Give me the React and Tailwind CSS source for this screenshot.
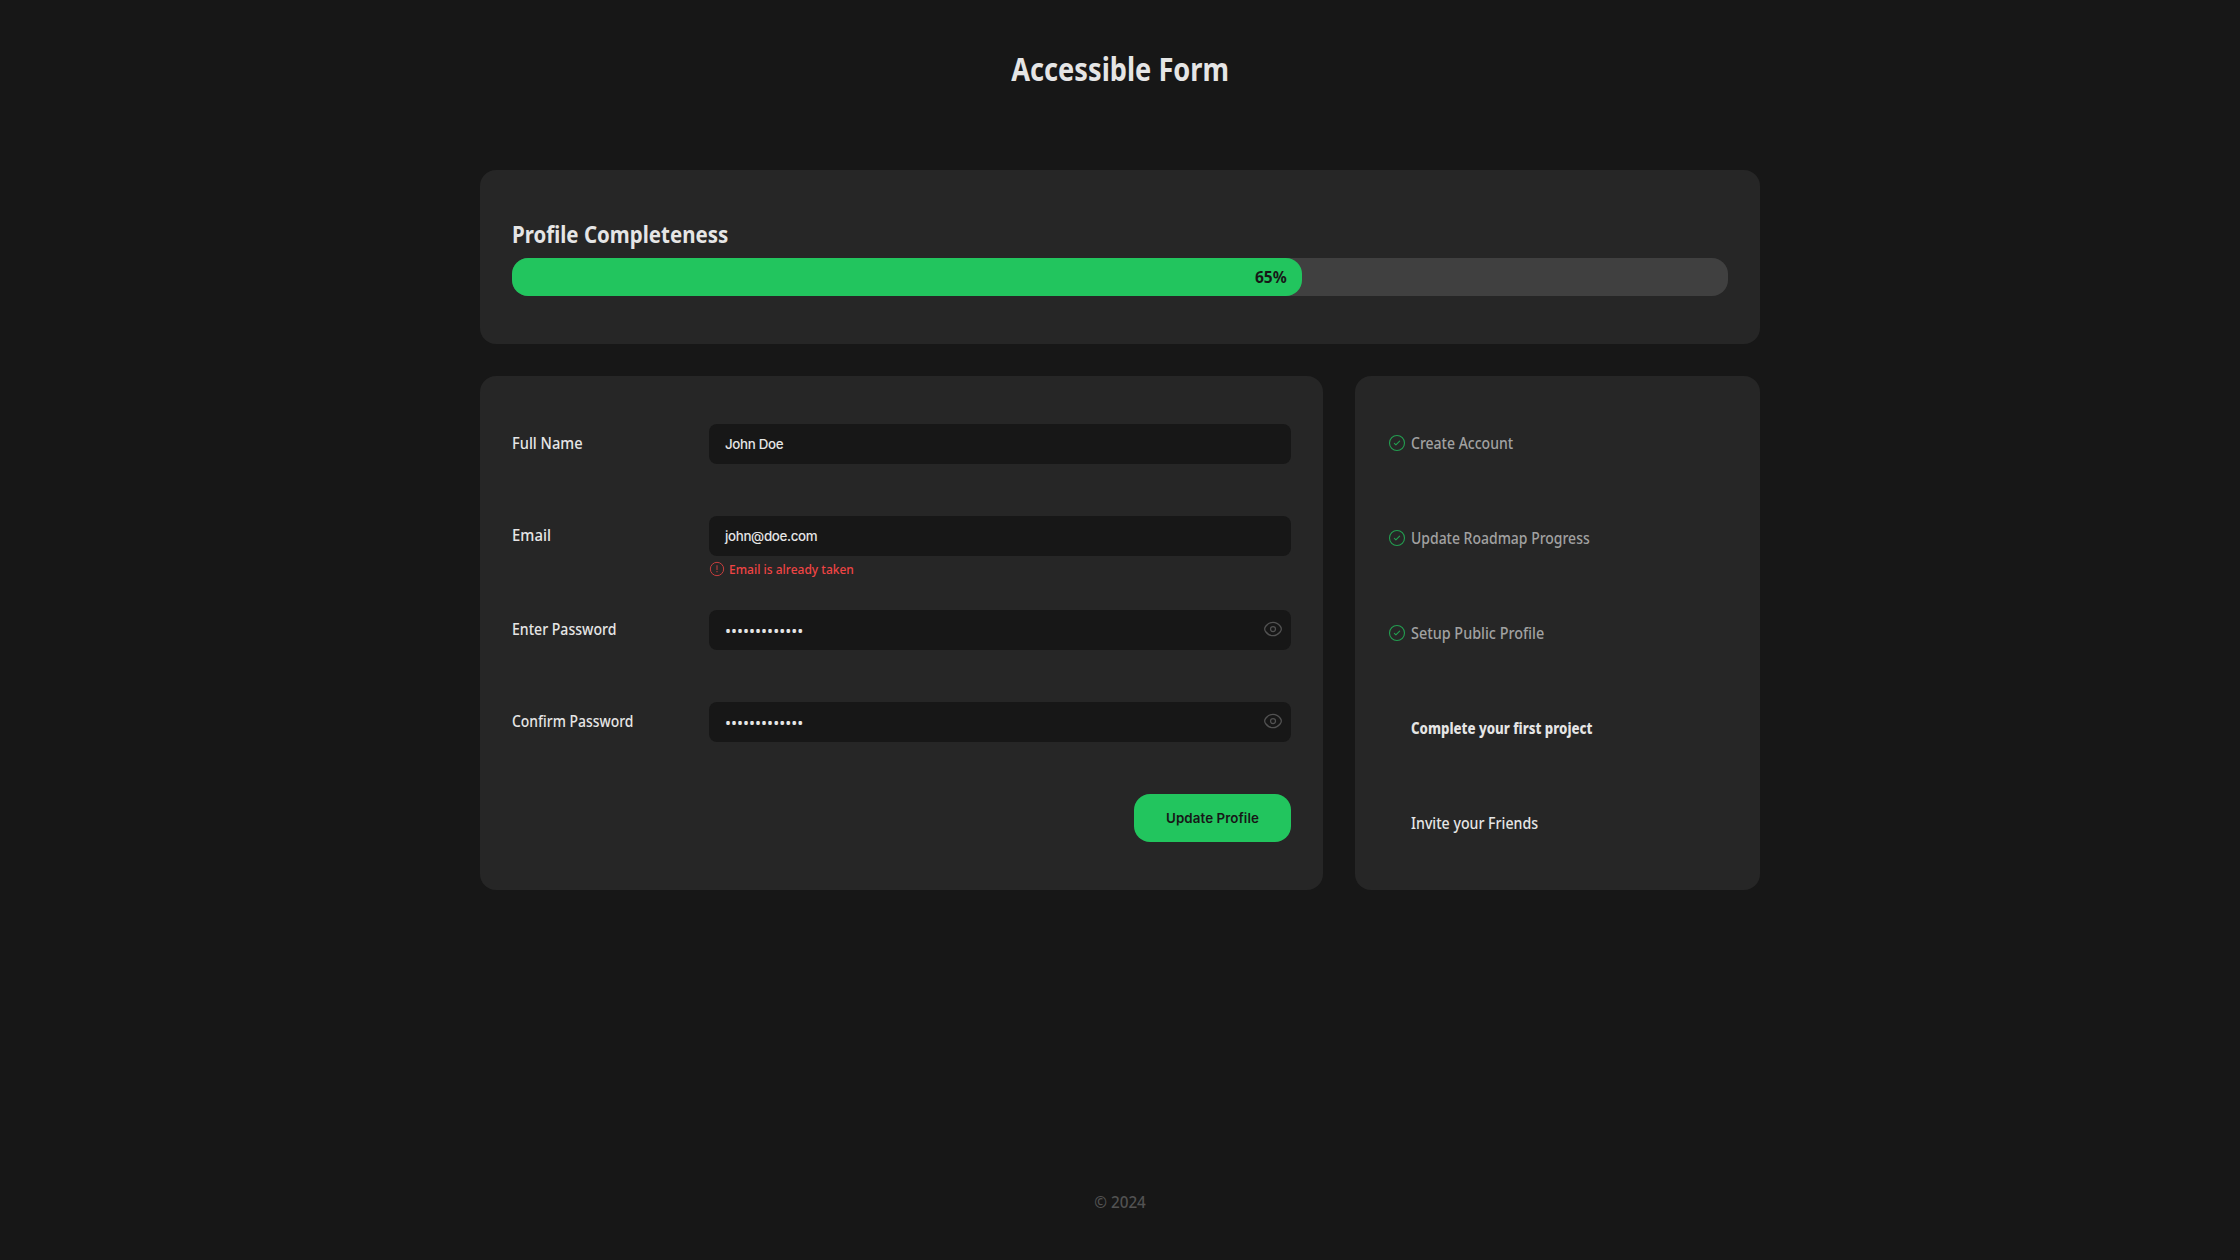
const fields = [
  { label: "Full Name", scale: "scale-x-[0.915]", value: "John Doe" },
  {
    label: "Email",
    scale: "scale-x-[0.93]",
    value: "john@doe.com",
    error: "Email is already taken",
  },
  { label: "Enter Password", scale: "scale-x-[0.88]", value: "•••••••••••••", secret: true },
  { label: "Confirm Password", scale: "scale-x-[0.87]", value: "•••••••••••••", secret: true },
];

const steps = [
  { label: "Create Account", scale: "scale-x-[0.876]", state: "done" },
  { label: "Update Roadmap Progress", scale: "scale-x-[0.873]", state: "done" },
  { label: "Setup Public Profile", scale: "scale-x-[0.899]", state: "done" },
  { label: "Complete your first project", scale: "scale-x-[0.828]", state: "current" },
  { label: "Invite your Friends", scale: "scale-x-[0.885]", state: "todo" },
];

const stepStyles = {
  done: "font-medium text-neutral-400",
  current: "font-extrabold text-neutral-200",
  todo: "font-medium text-neutral-200",
};

function CheckCircle() {
  return (
    <svg
      viewBox="0 0 24 24"
      className="size-[18px] text-[#22c55e] opacity-75"
      fill="none"
      stroke="currentColor"
      strokeWidth="1.5"
    >
      <circle cx="12" cy="12" r="10" />
      <path d="M8.5 12.5L10.5 14.5L15.5 9.5" strokeLinecap="round" strokeLinejoin="round" />
    </svg>
  );
}

function DangerCircle() {
  return (
    <svg viewBox="0 0 24 24" className="size-4 shrink-0 opacity-80" fill="none">
      <circle cx="12" cy="12" r="10" stroke="currentColor" strokeWidth="1.5" />
      <path d="M12 7V13" stroke="currentColor" strokeWidth="1.5" strokeLinecap="round" />
      <circle cx="12" cy="16" r="1" fill="currentColor" />
    </svg>
  );
}

function Eye() {
  return (
    <svg
      viewBox="0 0 24 24"
      className="size-5 text-neutral-600"
      fill="none"
      stroke="currentColor"
      strokeWidth="1.5"
    >
      <path d="M3.27489 15.2957C2.42496 14.1915 2 13.6394 2 12C2 10.3606 2.42496 9.80853 3.27489 8.70433C4.97196 6.49956 7.81811 4 12 4C16.1819 4 19.028 6.49956 20.7251 8.70433C21.575 9.80853 22 10.3606 22 12C22 13.6394 21.575 14.1915 20.7251 15.2957C19.028 17.5004 16.1819 20 12 20C7.81811 20 4.97196 17.5004 3.27489 15.2957Z" />
      <path d="M15 12C15 13.6569 13.6569 15 12 15C10.3431 15 9 13.6569 9 12C9 10.3431 10.3431 9 12 9C13.6569 9 15 10.3431 15 12Z" />
    </svg>
  );
}

function Field({ label, scale, value, error, secret }) {
  return (
    <div className="flex items-start">
      <label className="w-[197px] text-base leading-[39px] font-medium">
        <span className={`inline-block origin-left ${scale}`}>{label}</span>
      </label>
      <div className={error ? "h-[94px] flex-1" : "h-[92px] flex-1"}>
        <div className="flex h-10 items-center justify-between rounded-lg bg-neutral-900 pr-2 pl-4">
          {secret ? (
            <span className="pt-0.5 text-base leading-none">{value}</span>
          ) : (
            <span className="pt-0.5 font-['Inter',sans-serif] text-[13.333px] font-medium tracking-[-0.33px]">
              {value}
            </span>
          )}
          {secret && (
            <button type="button" aria-label="Show password" className="-mt-0.5">
              <Eye />
            </button>
          )}
        </div>
        {error && (
          <div className="mt-[5px] flex h-4 items-center gap-1 text-[13px] leading-4 font-medium text-[#ef4444]">
            <DangerCircle />
            <span className="inline-block origin-left scale-x-[0.923]">{error}</span>
          </div>
        )}
      </div>
    </div>
  );
}

export default function App() {
  return (
    <div className="flex h-[1260px] flex-col items-center bg-neutral-900 font-['Noto_Sans',sans-serif] text-neutral-200">
      <header className="flex h-[170px] items-start justify-center pt-[45px]">
        <h1 className="origin-center scale-x-[0.85] text-[32px] leading-12 font-bold">
          Accessible Form
        </h1>
      </header>

      <main className="flex w-[1280px] flex-1 flex-col gap-8">
        <section className="h-[174px] rounded-2xl bg-[#262626] px-8 py-12">
          <h2 className="h-10 origin-left scale-x-[0.853] text-2xl leading-8 font-bold">
            Profile Completeness
          </h2>
          <div className="h-[38px] rounded-2xl bg-neutral-700">
            <div className="flex h-full w-[65%] items-center justify-end rounded-2xl bg-[#22c55e] pr-4 font-bold text-neutral-900">
              <span className="inline-block origin-right scale-x-[0.97] leading-[38px]">65%</span>
            </div>
          </div>
        </section>

        <div className="flex h-[514px] gap-8">
          <form className="flex w-[843px] flex-col rounded-2xl bg-[#262626] px-8 py-12">
            {fields.map((field) => (
              <Field key={field.label} {...field} />
            ))}
            <button
              type="button"
              className="h-12 w-[157px] self-end rounded-2xl bg-[#22c55e] pt-0.5 font-['Inter',sans-serif] text-[13.333px] font-semibold tracking-[0.08px] text-neutral-900"
            >
              Update Profile
            </button>
          </form>

          <ul className="flex flex-1 flex-col gap-[57px] rounded-2xl bg-[#262626] py-12 pr-8 pl-[33px]">
            {steps.map((step) => (
              <li key={step.label} className="flex h-[38px] items-center gap-[5px]">
                <span className="size-[18px]">{step.state === "done" && <CheckCircle />}</span>
                <span
                  className={`inline-block origin-left leading-[39px] ${step.scale} ${stepStyles[step.state]}`}
                >
                  {step.label}
                </span>
              </li>
            ))}
          </ul>
        </div>
      </main>

      <footer className="flex h-[116px] shrink-0 justify-center pt-[46px] leading-6 text-neutral-600">
        <span className="inline-block h-6 scale-x-[0.955] font-medium">© 2024</span>
      </footer>
    </div>
  );
}
